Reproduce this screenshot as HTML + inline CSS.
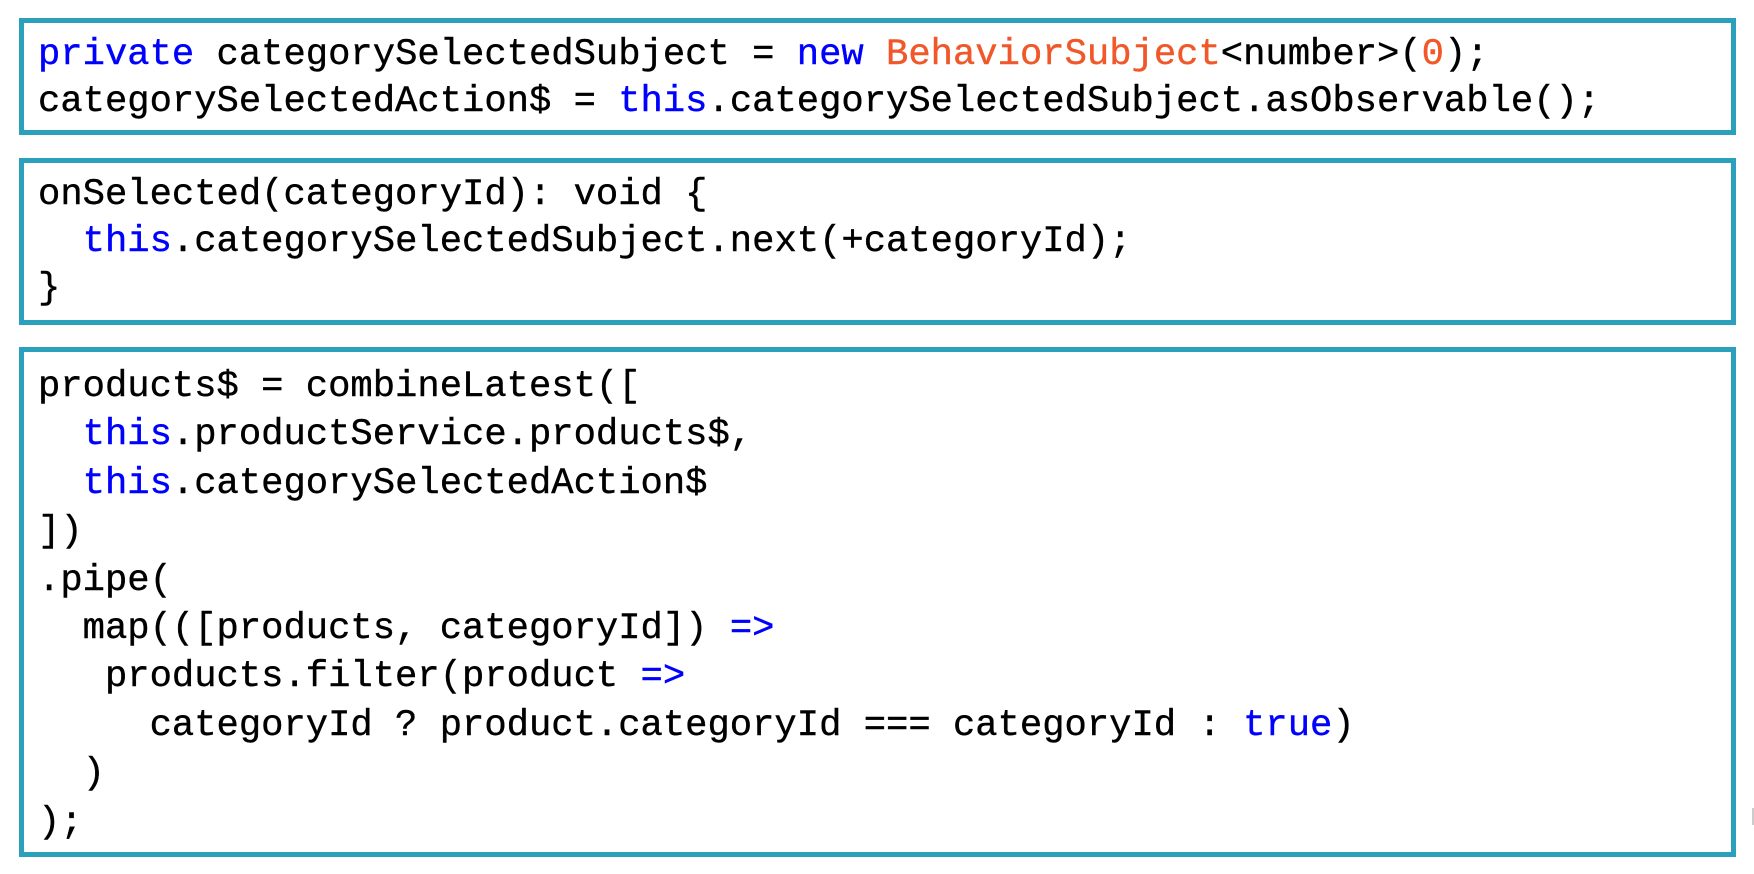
<!DOCTYPE html>
<html><head><meta charset="utf-8"><style>
html,body{margin:0;padding:0;background:#fff;width:1754px;height:874px;overflow:hidden;position:relative}
.box{position:absolute;left:19px;width:1707px;border:5px solid #2ba0bd;box-sizing:content-box}
.code{position:absolute;left:38px;margin:0;font-family:"Liberation Mono",monospace;font-size:37.2px;color:#000;white-space:pre;-webkit-text-stroke:0.4px currentColor}
.k{color:#0000ff}.o{color:#f0582a}
</style></head><body>
<div class="box" style="top:18px;height:107px"></div>
<div class="box" style="top:158px;height:157px"></div>
<div class="box" style="top:347px;height:500px"></div>
<pre class="code" style="top:32px;line-height:47px"><span class="k">private</span> categorySelectedSubject = <span class="k">new</span> <span class="o">BehaviorSubject</span>&lt;number&gt;(<span class="o">0</span>);
categorySelectedAction$ = <span class="k">this</span>.categorySelectedSubject.asObservable();</pre>
<pre class="code" style="top:172px;line-height:47px">onSelected(categoryId): void {
  <span class="k">this</span>.categorySelectedSubject.next(+categoryId);
}</pre>
<pre class="code" style="top:363px;line-height:48.4px">products$ = combineLatest([
  <span class="k">this</span>.productService.products$,
  <span class="k">this</span>.categorySelectedAction$
])
.pipe(
  map(([products, categoryId]) <span class="k">=&gt;</span>
   products.filter(product <span class="k">=&gt;</span>
     categoryId ? product.categoryId === categoryId : <span class="k">true</span>)
  )
);</pre>
<div style="position:absolute;left:1752px;top:808px;width:2px;height:17px;background:#ccc"></div>
</body></html>
